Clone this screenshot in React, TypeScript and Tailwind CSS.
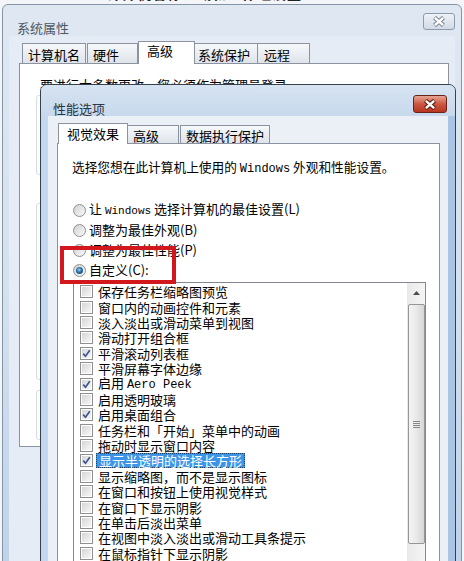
import React from "react";

const F = "font-['Noto_Sans_CJK_SC','Noto_Sans',sans-serif]";
const M = "font-['Liberation_Mono','Noto_Sans_CJK_SC',monospace]";

function XGlyph({ outline, fill }: { outline: string; fill: string }) {
  return (
    <svg width="14" height="11" viewBox="0 0 14 11">
      <path d="M2.5 1.5 L11.5 9.5 M11.5 1.5 L2.5 9.5" stroke={outline} strokeWidth="4.4" strokeLinecap="butt" />
      <path d="M2.9 1.9 L11.1 9.1 M11.1 1.9 L2.9 9.1" stroke={fill} strokeWidth="2.4" strokeLinecap="butt" />
    </svg>
  );
}

function Checkbox({ checked }: { checked: boolean }) {
  return (
    <div className="w-[13px] h-[13px] border border-[#8e8f8f] bg-white p-[1px] shrink-0">
      <div className="w-full h-full bg-gradient-to-br from-[#d6d6d6] to-[#f7f7f7] flex items-center justify-center">
        {checked && (
          <svg width="9" height="9" viewBox="0 0 9 9">
            <path d="M1.2 4.6 L3.5 7.2 L7.8 1.2" fill="none" stroke="#3f5494" strokeWidth="1.7" />
          </svg>
        )}
      </div>
    </div>
  );
}

function Radio({ checked }: { checked: boolean }) {
  return (
    <div className="w-[13px] h-[13px] rounded-full border border-[#8e8f8f] bg-gradient-to-br from-[#d0d0d0] to-[#fbfbfb] flex items-center justify-center shrink-0">
      {checked && (
        <div className="w-[7px] h-[7px] rounded-full bg-[radial-gradient(circle_at_45%_40%,#9bd6f7_0%,#2a6da5_45%,#123a5e_100%)]" />
      )}
    </div>
  );
}

type Item = { text: React.ReactNode; checked: boolean; sel?: boolean };

const items: Item[] = [
  { text: "保存任务栏缩略图预览", checked: false },
  { text: "窗口内的动画控件和元素", checked: false },
  { text: "淡入淡出或滑动菜单到视图", checked: false },
  { text: "滑动打开组合框", checked: false },
  { text: "平滑滚动列表框", checked: true },
  { text: "平滑屏幕字体边缘", checked: false },
  {
    text: (
      <>
        启用 <span className={`${M} text-[12px] leading-[15px]`}>Aero Peek</span>
      </>
    ),
    checked: true,
  },
  { text: "启用透明玻璃", checked: false },
  { text: "启用桌面组合", checked: true },
  { text: "任务栏和「开始」菜单中的动画", checked: false },
  { text: "拖动时显示窗口内容", checked: false },
  { text: "显示半透明的选择长方形", checked: true, sel: true },
  { text: "显示缩略图，而不是显示图标", checked: false },
  { text: "在窗口和按钮上使用视觉样式", checked: false },
  { text: "在窗口下显示阴影", checked: false },
  { text: "在单击后淡出菜单", checked: false },
  { text: "在视图中淡入淡出或滑动工具条提示", checked: false },
  { text: "在鼠标指针下显示阴影", checked: false },
  { text: "在桌面上为图标标签使用阴影", checked: false },
];

export default function App() {
  return (
    <div className={`relative w-[464px] h-[561px] overflow-hidden bg-[#f3f5f8] text-black ${F}`}>
      {/* clipped text above */}
      <div className="absolute left-[107px] top-[-15px] text-[14px] font-bold text-[#222] leading-[16px] tracking-[1px]">
        计算机名称、域和工作组设置
      </div>

      {/* Back window: 系统属性 */}
      <div className="absolute left-[2px] top-[4px] w-[460px] h-[620px] rounded-t-[6px] border border-[#8595a8] bg-gradient-to-b from-[#dfe8f2] via-[#d3e0ee] to-[#b9cfe8] flex flex-col">
        <div className="relative h-[31px] shrink-0 pl-[14px] pt-[9px]">
          <span className="text-[13px] leading-[18px] text-[#4d5866]">系统属性</span>
          <div className="absolute right-[6px] top-[8px] w-[32px] h-[17px] rounded-[3px] border border-[#8d9aab] bg-gradient-to-b from-[#eef2f7] to-[#d3dbe6] flex items-center justify-center">
            <XGlyph outline="#7f8a98" fill="#ffffff" />
          </div>
        </div>
        <div className="mx-[6px] flex-1 bg-[#e5ecf5] pl-[10px] pr-[6px] pt-[5px] flex flex-col">
          <div className="flex items-end h-[22px] text-[13px] leading-[16px]">
            <div className="ml-[3px] w-[64px] h-[20px] border border-b-0 border-[#8c93a0] bg-gradient-to-b from-[#f6f8fa] to-[#dfe4ea] flex items-center justify-center pt-[3px]">
              计算机名
            </div>
            <div className="ml-[1px] w-[51px] h-[20px] border border-b-0 border-[#8c93a0] bg-gradient-to-b from-[#f6f8fa] to-[#dfe4ea] flex items-center pl-[5px] pt-[3px]">
              硬件
            </div>
            <div className="relative z-10 -mb-[1px] w-[57px] h-[23px] border border-b-0 border-[#8c93a0] bg-white flex items-start pl-[8px] pt-[1px]">
              高级
            </div>
            <div className="w-[63px] h-[20px] border border-b-0 border-l-0 border-[#8c93a0] bg-gradient-to-b from-[#f6f8fa] to-[#dfe4ea] flex items-center pl-[3px] pt-[3px]">
              系统保护
            </div>
            <div className="w-[52px] h-[20px] border border-b-0 border-l-0 border-[#8c93a0] bg-gradient-to-b from-[#f6f8fa] to-[#dfe4ea] flex items-center pl-[6px] pt-[3px]">
              远程
            </div>
          </div>
          <div className="w-[430px] h-[384px] border border-[#8c93a0] bg-white pl-[16px] pt-[13px] flex flex-col">
            <div className="pl-[4px] text-[13px] leading-[16px]">要进行大多数更改，您必须作为管理员登录。</div>
            <div className="mt-[2px] h-[80px] w-[400px] rounded-[3px] border border-[#d5dde5]" />
            <div className="mt-[28px] h-[177px] w-[400px] rounded-[3px] border border-[#d5dde5]" />
            <div className="mt-[10px] h-[50px] w-[400px] rounded-[3px] border border-[#d5dde5]" />
          </div>
        </div>
      </div>

      {/* Front window: 性能选项 */}
      <div className="absolute left-[40px] top-[84px] w-[416px] h-[520px] rounded-t-[7px] border border-[#37414e] bg-gradient-to-r from-[#c3d7ee] via-[#d2e1f2] to-[#a9c4e4] flex flex-col">
        <div className="relative h-[31px] shrink-0 pl-[12px] pt-[10px] bg-gradient-to-b from-[#d6e3f1] to-[#c8d9ed] rounded-t-[6px]">
          <span className="text-[13px] leading-[18px] text-[#2c3642]">性能选项</span>
          <div className="absolute right-[8px] top-[10px] w-[34px] h-[18px] rounded-[3px] border border-[#6b2318] bg-gradient-to-b from-[#e5a596] via-[#cc5640] to-[#b9361f] flex items-center justify-center">
            <XGlyph outline="#5a1d14" fill="#ffffff" />
          </div>
        </div>
        <div className="mx-[7px] flex-1 bg-[#ebf0f6] pl-[9px] pr-[8px] pt-[7px] flex flex-col">
          <div className="flex items-end h-[20px] text-[13px] leading-[16px]">
            <div className="relative z-10 -mb-[1px] ml-[1px] w-[70px] h-[21px] border border-b-0 border-[#8c93a0] bg-white flex items-center justify-center pb-[1px]">
              视觉效果
            </div>
            <div className="w-[51px] h-[18px] border border-b-0 border-l-0 border-[#8c93a0] bg-gradient-to-b from-[#f6f8fa] to-[#dfe4ea] flex items-center pl-[5px] pt-[2px]">
              高级
            </div>
            <div className="ml-[1px] w-[90px] h-[18px] border border-b-0 border-[#8c93a0] bg-gradient-to-b from-[#f6f8fa] to-[#dfe4ea] flex items-center justify-center pt-[2px]">
              数据执行保护
            </div>
          </div>
          <div className="flex-1 border border-[#8c93a0] bg-white flex flex-col">
            <div className="pl-[14px] pt-[14px] text-[12.7px] leading-[18px] whitespace-nowrap">
              选择您想在此计算机上使用的 <span className={`${M} text-[12px]`}>Windows</span> 外观和性能设置。
            </div>
            <div className="mt-[22px] pl-[15px] flex flex-col text-[13px] leading-[16px]">
              <div className="h-[20px] flex items-center">
                <Radio checked={false} />
                <span className="ml-[3px] whitespace-nowrap">
                  让 <span className={`${M} text-[11px]`}>Windows</span> 选择计算机的最佳设置(L)
                </span>
              </div>
              <div className="h-[20px] flex items-center">
                <Radio checked={false} />
                <span className="ml-[3px]">调整为最佳外观(B)</span>
              </div>
              <div className="h-[20px] flex items-center">
                <Radio checked={false} />
                <span className="ml-[3px]">调整为最佳性能(P)</span>
              </div>
              <div className="h-[20px] flex items-center">
                <Radio checked={true} />
                <span className="ml-[3px]">自定义(C):</span>
              </div>
            </div>
            <div className="mt-[2px] ml-[15px] w-[353px] h-[300px] border border-[#828790] flex">
              <div className="flex-1 pt-[1px] flex flex-col text-[13px] leading-[15px]">
                {items.map((it, i) => (
                  <div key={i} className="h-[15.4px] shrink-0 flex items-center pl-[6px] whitespace-nowrap">
                    <Checkbox checked={it.checked} />
                    {it.sel ? (
                      <span className="ml-[3px] px-[2px] leading-[13px] bg-[#3d95e8] text-white border border-dotted border-[#1b3f66]">
                        {it.text}
                      </span>
                    ) : (
                      <span className="ml-[5px] leading-[15px]">{it.text}</span>
                    )}
                  </div>
                ))}
              </div>
              <div className="w-[18px] shrink-0 bg-gradient-to-r from-[#e9e9e9] to-[#f5f5f5] flex flex-col items-center">
                <div className="h-[19px] w-full flex items-center justify-center">
                  <svg width="7" height="4" viewBox="0 0 7 4">
                    <path d="M0 4 L3.5 0 L7 4 Z" fill="#4d4d4d" />
                  </svg>
                </div>
                <div className="mt-[2px] w-[17px] h-[240px] rounded-[2px] border border-[#979797] bg-gradient-to-r from-[#f4f4f4] via-[#e9e9e9] to-[#d6d6d6] flex items-center justify-center">
                  <div className="flex flex-col gap-[1px]">
                    <div className="w-[7px] h-[1px] bg-[#8a8a8a]" />
                    <div className="w-[7px] h-[1px] bg-[#8a8a8a]" />
                    <div className="w-[7px] h-[1px] bg-[#8a8a8a]" />
                    <div className="w-[7px] h-[1px] bg-[#8a8a8a]" />
                  </div>
                </div>
              </div>
            </div>
          </div>
        </div>
        {/* red annotation box */}
        <div className="absolute left-[19px] top-[161px] w-[116px] h-[38px] border-[4px] border-[#d3181d] z-20" />
      </div>
    </div>
  );
}
